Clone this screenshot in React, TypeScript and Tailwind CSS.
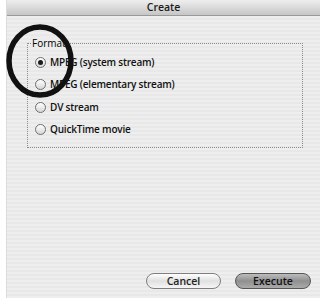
const options = [
  "MPEG (system stream)",
  "MPEG (elementary stream)",
  "DV stream",
  "QuickTime movie",
];

function Radio({ checked }: { checked?: boolean }) {
  return (
    <span className="flex h-[11px] w-[11px] shrink-0 items-center justify-center rounded-full border border-[#6e6e6e] bg-[linear-gradient(180deg,#ffffff,#d6d6d6)]">
      {checked && <span className="h-[5px] w-[5px] rounded-full bg-[#1a1a1a]" />}
    </span>
  );
}

export default function App() {
  return (
    <div className="flex h-[298px] w-[320px] bg-white font-['Open_Sans',sans-serif] text-black">
      <div className="relative ml-[6px] flex flex-1 flex-col border-l border-[#dcdcdc]">
        {/* title bar */}
        <div className="flex h-[16px] items-center justify-center border-b border-[#999] bg-[linear-gradient(180deg,#eeeeee,#c6c6c6)] text-[10.5px] font-semibold text-[#1a1a1a]">
          Create
        </div>

        <div className="flex flex-1 flex-col bg-[repeating-linear-gradient(0deg,#eeeeee_0px,#eeeeee_2px,#e8e8e8_2px,#e8e8e8_4px)]">
          {/* format group */}
          <div className="relative ml-[20px] mt-[27px] h-[105px] w-[276px] border border-dotted border-[#8c8c8c]">
            <span className="absolute left-[3px] top-[-8px] bg-[#ececec] px-[1px] text-[10px] font-medium leading-[14px]">
              Format
            </span>
            <div className="flex flex-col pl-[7px] pt-[7px]">
              {options.map((o, i) => (
                <div key={o} className="flex h-[22.5px] items-center gap-[4px] text-[10px] font-semibold tracking-[-0.2px] text-[#111]">
                  <Radio checked={i === 0} />
                  <span>{o}</span>
                </div>
              ))}
            </div>
          </div>

          <div className="flex-1" />

          {/* buttons */}
          <div className="mb-[9px] flex justify-end gap-[14px] pr-[9px]">
            <button className="h-[16px] w-[75px] rounded-full border border-[#7e7e7e] bg-[linear-gradient(180deg,#ffffff,#e0e0e0_50%,#f6f6f6)] text-[10.5px] font-semibold leading-none text-[#222]">
              Cancel
            </button>
            <button className="h-[16px] w-[76px] rounded-full border border-[#555] bg-[linear-gradient(180deg,#bdbdbd,#8f8f8f_50%,#ababab)] text-[10.5px] font-semibold leading-none text-[#111]">
              Execute
            </button>
          </div>
        </div>

        {/* annotation circle */}
        <svg className="pointer-events-none absolute left-[-6px] top-0" width="90" height="110">
          <ellipse cx="39" cy="61" rx="31" ry="34" fill="none" stroke="#111" strokeWidth="5.5" />
        </svg>
      </div>
    </div>
  );
}
